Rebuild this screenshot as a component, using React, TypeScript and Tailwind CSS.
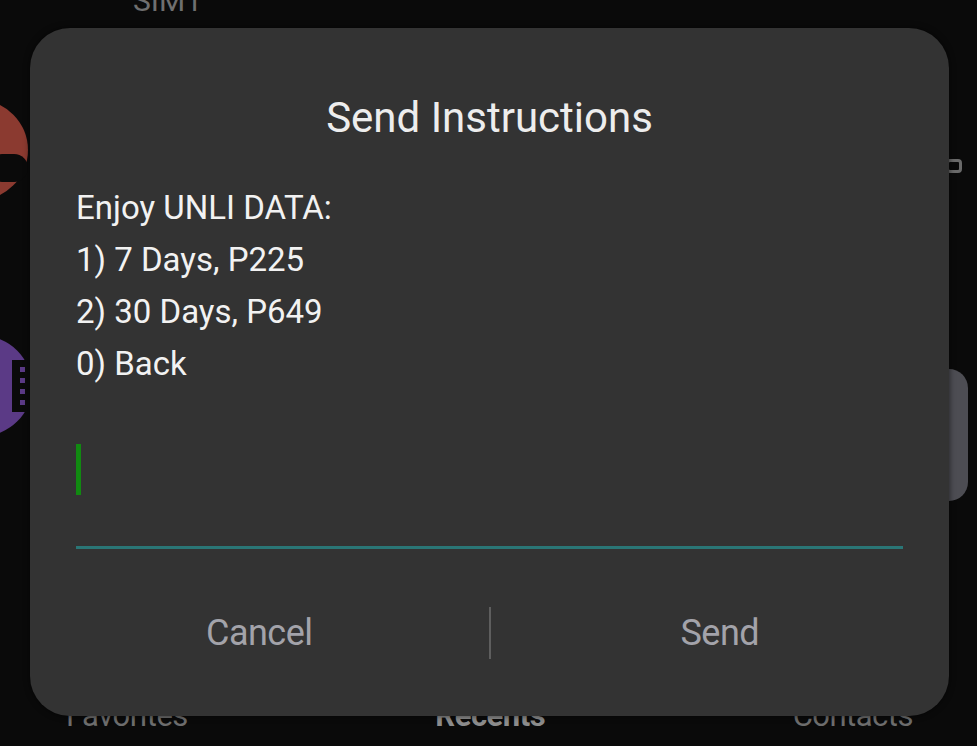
import { useState } from 'react';

const font = { fontFamily: 'Roboto, "Noto Sans", sans-serif' };

function BackgroundScreen() {
  return (
    <>
      {/* content peeking out from under the dialog */}
      <div className="absolute left-[133px] top-[-14px] text-[30px] text-[#6f6f6f] leading-none">SIM1</div>

      <div className="absolute left-[-72px] top-[100px] h-[100px] w-[100px] rounded-full bg-[#8b3a30]">
        <div className="absolute left-[60px] top-[54px] h-[28px] w-[40px] rounded-full bg-[#0a0a0a]" />
      </div>

      <div className="absolute left-[-68px] top-[336px] h-[100px] w-[100px] rounded-full bg-[#5b3a86]">
        <div className="absolute left-[80px] top-[24px] flex h-[52px] w-[20px] flex-col items-center justify-around bg-[#0a0a0a] py-[4px]">
          <span className="h-[5px] w-[5px] bg-[#5b3a86]" />
          <span className="h-[5px] w-[5px] bg-[#5b3a86]" />
          <span className="h-[5px] w-[5px] bg-[#5b3a86]" />
          <span className="h-[5px] w-[5px] bg-[#5b3a86]" />
        </div>
      </div>

      <div className="absolute left-[946px] top-[159px] h-[14px] w-[16px] rounded-[4px] border-[3px] border-[#6a6a6a]" />
      <div className="absolute left-[930px] top-[369px] h-[132px] w-[38px] rounded-[20px] bg-[#4d4d53]" />

      <div className="absolute left-0 top-[700px] flex w-full justify-between pl-[66px] pr-[64px] text-[31px] leading-none tracking-[-0.5px]">
        <span className="text-[#6d6d6d]">Favorites</span>
        <span className="font-bold text-[#8c8c8c]">Recents</span>
        <span className="text-[#6d6d6d]">Contacts</span>
      </div>
    </>
  );
}

export default function App() {
  const [code, setCode] = useState('');

  return (
    <div className="relative h-[746px] w-[977px] overflow-hidden bg-[#0a0a0a]" style={font}>
      <BackgroundScreen />

      <div className="absolute left-[30px] top-[28px] flex h-[688px] w-[919px] flex-col rounded-[40px] bg-[#333333] px-[46px] shadow-[0_0_6px_rgba(0,0,0,0.6)]">
        <h1 className="mt-[64px] text-center text-[42px] leading-[52px] text-[#ededed]">Send Instructions</h1>

        <div className="mt-[38px] text-[33px] leading-[52px] text-[#f2f2f2]">
          <p>Enjoy UNLI DATA:</p>
          <p>1) 7 Days, P225</p>
          <p>2) 30 Days, P649</p>
          <p>0) Back</p>
        </div>

        <div className="mt-[54px] flex h-[105px] items-start border-b-[3px] border-[#2a7676]">
          <span className="h-[51px] w-[5px] bg-[#118a11]" />
          <input
            value={code}
            onChange={(e) => setCode(e.target.value)}
            className="h-[51px] flex-1 bg-transparent text-[33px] text-[#f2f2f2] outline-none"
          />
        </div>

        <div className="-mx-[46px] mt-[57px] flex items-center text-[36px] text-[#a3a3aa]">
          <button className="flex-1 text-center tracking-[-0.5px]">Cancel</button>
          <span className="h-[52px] w-[2px] bg-[#5e5e5e]" />
          <button className="flex-1 text-center tracking-[-0.5px]">Send</button>
        </div>
      </div>
    </div>
  );
}
